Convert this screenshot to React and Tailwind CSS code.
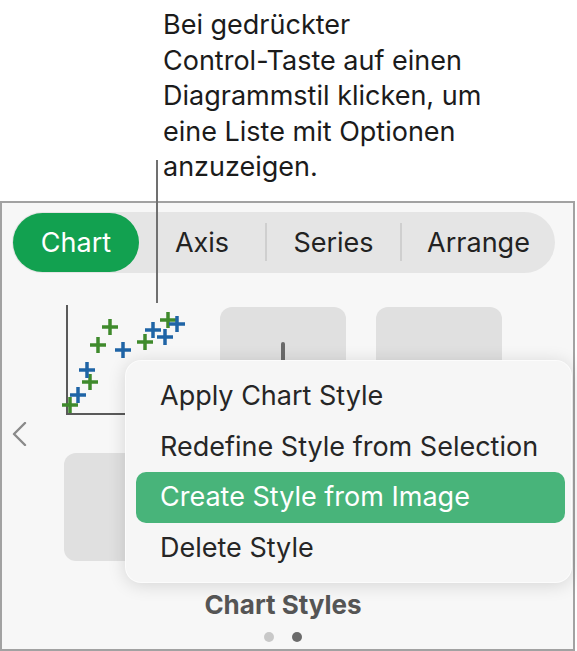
import React from 'react';

const greenPlus = [
  [70, 405], [90, 382], [98, 345], [110, 327], [145, 342], [168, 320],
];
const bluePlus = [
  [78, 395], [87, 370], [123, 350], [153, 330], [165, 337], [177, 324],
];

// thumbnail cell origin in page coords: (64, 307)
function Plus({ x, y, color }) {
  const cx = x - 64;
  const cy = y - 307;
  return (
    <g stroke={color} strokeWidth="3.5" strokeLinecap="butt">
      <line x1={cx - 8} y1={cy} x2={cx + 8} y2={cy} />
      <line x1={cx} y1={cy - 8} x2={cx} y2={cy + 8} />
    </g>
  );
}

function ScatterThumb() {
  return (
    <div className="relative h-[108px] w-[126px]">
      <svg width="126" height="108" viewBox="0 0 126 108" className="overflow-visible">
        <line x1="3" y1="-2" x2="3" y2="107" stroke="#5a5a5a" strokeWidth="2" />
        <line x1="2" y1="107" x2="126" y2="107" stroke="#5a5a5a" strokeWidth="2" />
        {greenPlus.map(([x, y], i) => (
          <Plus key={'g' + i} x={x} y={y} color="#3f8a2c" />
        ))}
        {bluePlus.map(([x, y], i) => (
          <Plus key={'b' + i} x={x} y={y} color="#1f64a6" />
        ))}
      </svg>
    </div>
  );
}

const menuItems = [
  'Apply Chart Style',
  'Redefine Style from Selection',
  'Create Style from Image',
  'Delete Style',
];

export default function App() {
  return (
    <div className="relative h-[651px] w-[577px] overflow-hidden bg-white font-['Inter',sans-serif]">
      {/* Callout */}
      <p className="pl-[163px] pt-[7px] text-[27px] leading-[35.5px] text-[#1b1b1b]">
        Bei gedrückter
        <br />
        Control-Taste auf einen
        <br />
        Diagrammstil klicken, um
        <br />
        eine Liste mit Optionen
        <br />
        anzuzeigen.
      </p>

      {/* Panel */}
      <div className="mt-[16px] h-[450px] w-[575px] border-2 border-[#a2a2a2] bg-[#f7f7f7]">
        {/* Segmented control */}
        <div className="ml-[10px] mt-[9px] flex h-[61px] w-[543px] items-center rounded-full bg-[#e5e5e5] text-[27px] text-[#222]">
          <div className="ml-px flex h-[59px] w-[126px] items-center justify-center rounded-full bg-[#12a150] pt-[3px] text-white">
            Chart
          </div>
          <div className="flex w-[126px] justify-center pt-[3px]">Axis</div>
          <div className="h-[38px] w-[2px] bg-[#cfcfcf]" />
          <div className="flex w-[133px] justify-center pt-[3px]">Series</div>
          <div className="h-[38px] w-[2px] bg-[#cfcfcf]" />
          <div className="flex w-[153px] justify-center pt-[3px]">Arrange</div>
        </div>

        {/* Thumbnails */}
        <div className="mt-[34px] flex">
          <div className="flex w-[62px] items-center pl-[10px]">
            <svg width="16" height="24" viewBox="0 0 16 24" fill="none">
              <polyline points="13,1 2,12 13,23" stroke="#8a8a8a" strokeWidth="2.4" strokeLinecap="round" strokeLinejoin="round" />
            </svg>
          </div>
          <div className="grid grid-cols-[126px_126px_126px] grid-rows-[108px_108px] gap-x-[30px] gap-y-[38px]">
            <ScatterThumb />
            <div className="relative rounded-[12px] bg-[#e0e0e0]">
              <div className="absolute left-[61px] top-[35px] h-[30px] w-[4px] rounded-full bg-[#6a6a6a]" />
            </div>
            <div className="rounded-[12px] bg-[#e0e0e0]" />
            <div className="rounded-[12px] bg-[#e0e0e0]" />
            <div className="rounded-[12px] bg-[#e0e0e0]" />
            <div className="rounded-[12px] bg-[#e0e0e0]" />
          </div>
        </div>

        {/* Title + page dots */}
        <div className="ml-[62px] mt-[29px] flex w-[438px] flex-col items-center">
          <div className="text-[26px] font-bold leading-[30px] text-[#555]">Chart Styles</div>
          <div className="mt-[12px] flex gap-[18px]">
            <span className="h-[10px] w-[10px] rounded-full bg-[#c8c8c8]" />
            <span className="h-[10px] w-[10px] rounded-full bg-[#6b6b6b]" />
          </div>
        </div>
      </div>

      {/* Callout line */}
      <div className="absolute left-[156px] top-[160px] h-[143px] w-[2px] bg-[#707070]" />

      {/* Context menu */}
      <div className="absolute left-[125px] top-[360px] flex h-[223px] w-[447px] flex-col rounded-[16px] border border-white/70 bg-[#f6f6f6] pb-[9px] pl-[10px] pr-[6px] pt-[10px] text-[27px] text-[#262626] shadow-[0_2px_18px_rgba(0,0,0,0.14)]">
        {menuItems.map((item, i) => (
          <div
            key={item}
            className={
              i === 2
                ? 'flex h-[51px] items-center rounded-[10px] bg-[#48b47a] pl-[24px] text-white'
                : 'flex h-[51px] items-center pl-[24px]'
            }
          >
            {item}
          </div>
        ))}
      </div>
    </div>
  );
}
